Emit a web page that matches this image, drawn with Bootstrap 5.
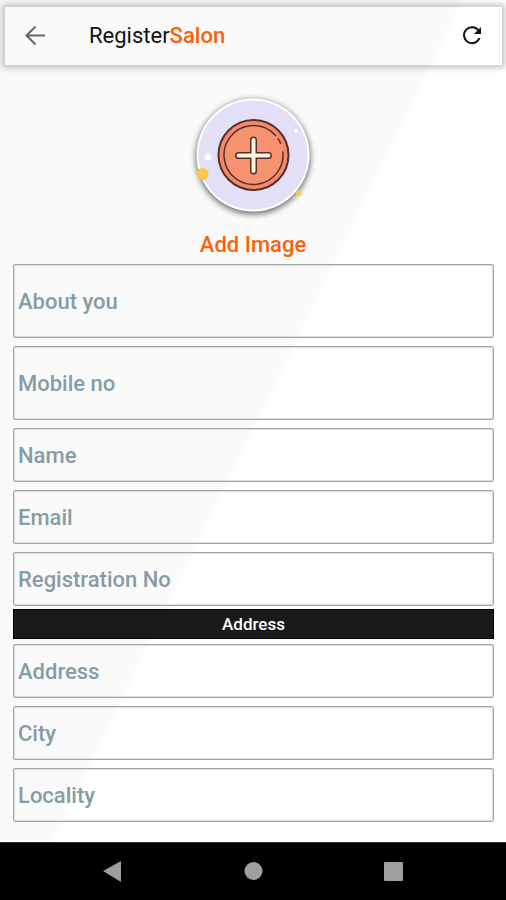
<!DOCTYPE html>
<html lang="en">
<head>
<meta charset="utf-8">
<meta name="viewport" content="width=device-width, initial-scale=1">
<title>Register Salon</title>
<link href="https://cdn.jsdelivr.net/npm/bootstrap@5.3.0/dist/css/bootstrap.min.css" rel="stylesheet">
<style>
  body { font-family: Roboto, "Liberation Sans", sans-serif; }
  .screen { background: linear-gradient(116deg, #fafafa calc(50% - 10px), #fff calc(50% - 8px)); }
  .app-bar { margin: 7px 4px 0 5px; height: 58px; padding: 0 20px; box-shadow: 0 0 6px 3px rgba(0,0,0,.22); }
  .app-title { font-size: 22px; line-height: 28px; margin-left: 44px; color: #111; }
  .accent { color: #ff5f0a; }
  .add-image { margin-top: 24px; margin-bottom: 5px; gap: 10px; font-size: 22px; line-height: 28px; }
  .avatar { width: 132px; height: 132px; }
  .fields { padding: 0 12px 20px 13px; }
  .field { height: 54px; padding: 0 4px; border: 1px solid #a6a6a6; box-shadow: inset 0 0 0 1px #dcdcdc; border-radius: 2px; background: transparent; font-size: 22px; font-weight: 500; color: #37474f; }
  .field:focus { background: transparent; }
  .field::placeholder { color: #879ca6; }
  .field-tall { height: 74px; }
  .band { margin: 3px 0 5px; font-size: 17px; line-height: 28px; background: #1a1a1a; border: 1px solid #000; }
  .system-bar { height: 58px; border-top: 1px solid #333; padding: 0 42px; }
</style>
</head>
<body>
<div class="screen min-vh-100 d-flex flex-column">
  <header class="app-bar d-flex align-items-center">
    <button type="button" class="btn p-0 border-0 d-flex" aria-label="Back">
      <svg width="20" height="20" viewBox="0 0 20 20" fill="none" stroke="#666" stroke-width="2"><path d="M20 9.500H1.500M10.500.500 1.500 9.500l9 9"/></svg>
    </button>
    <h1 class="app-title mb-0 fw-normal">Register<span class="accent fw-medium">Salon</span></h1>
    <button type="button" class="btn p-0 border-0 d-flex ms-auto" aria-label="Refresh">
      <svg width="20" height="20" viewBox="0 0 20 20"><path d="M16.500 4.500A8 8 0 1 0 17.500 12" fill="none" stroke="#111" stroke-width="2"/><path d="M19 1v7h-7z" fill="#111"/></svg>
    </button>
  </header>
  <main class="flex-grow-1 d-flex flex-column">
    <button type="button" class="add-image btn p-0 border-0 accent fw-medium d-flex flex-column align-items-center align-self-center">
      <svg class="avatar" viewBox="0 0 132 132" aria-hidden="true">
        <defs><filter id="soft" x="-20%" y="-20%" width="140%" height="140%"><feGaussianBlur stdDeviation="3"/></filter></defs>
        <circle cx="66" cy="68" r="57" fill="#000" opacity=".6" filter="url(#soft)"/>
        <circle cx="66" cy="66" r="56.500" fill="#fff"/>
        <circle cx="66" cy="66" r="54.500" fill="#e2dff6"/>
        <circle cx="66.500" cy="66" r="35" fill="#f58a6b" stroke="#54302c" stroke-width="2"/>
        <circle cx="66.500" cy="66" r="29.500" fill="#f79270" stroke="#54302c" stroke-width="1.500" stroke-dasharray="168 3 6 8.350" transform="rotate(-7 66.500 66)"/>
        <path d="M66.500 51v31M51.500 66.500h30" stroke="#54302c" stroke-width="7" stroke-linecap="round"/>
        <path d="M66.500 51v31M51.500 66.500h30" stroke="#fff4dc" stroke-width="4" stroke-linecap="round"/>
        <circle cx="21" cy="68" r="3.500" fill="#fff"/><circle cx="109" cy="42" r="2" fill="#fff"/>
        <circle cx="15.500" cy="85" r="6" fill="#fdc54b"/><circle cx="111.500" cy="104" r="3" fill="#f3c75c"/>
      </svg>
      <span>Add Image</span>
    </button>
    <form class="fields d-flex flex-column">
      <div class="d-flex flex-column gap-2">
        <input class="field field-tall form-control" type="text" placeholder="About you" aria-label="About you">
        <input class="field field-tall form-control" type="tel" placeholder="Mobile no" aria-label="Mobile no">
        <input class="field form-control" type="text" placeholder="Name" aria-label="Name">
        <input class="field form-control" type="email" placeholder="Email" aria-label="Email">
        <input class="field form-control" type="text" placeholder="Registration No" aria-label="Registration No">
      </div>
      <h2 class="band text-center text-white fw-medium">Address</h2>
      <div class="d-flex flex-column gap-2">
        <input class="field form-control" type="text" placeholder="Address" aria-label="Address">
        <input class="field form-control" type="text" placeholder="City" aria-label="City">
        <input class="field form-control" type="text" placeholder="Locality" aria-label="Locality">
      </div>
    </form>
  </main>
  <nav class="system-bar bg-black d-flex align-items-center justify-content-around" aria-label="System">
    <button type="button" class="btn p-0 border-0 d-flex" aria-label="System back"><svg width="20" height="22" viewBox="0 0 20 22"><path d="M1 10 19 0v21z" fill="#9e9e9e"/></svg></button>
    <button type="button" class="btn p-0 border-0 d-flex" aria-label="Home"><svg width="20" height="20" viewBox="0 0 20 20"><circle cx="10.500" cy="9" r="9" fill="#9e9e9e"/></svg></button>
    <button type="button" class="btn p-0 border-0 d-flex" aria-label="Recent apps"><svg width="20" height="20" viewBox="0 0 20 20"><rect width="19" height="19" rx="1" fill="#9e9e9e"/></svg></button>
  </nav>
</div>
<script src="https://cdn.jsdelivr.net/npm/bootstrap@5.3.0/dist/js/bootstrap.bundle.min.js"></script>
</body>
</html>
